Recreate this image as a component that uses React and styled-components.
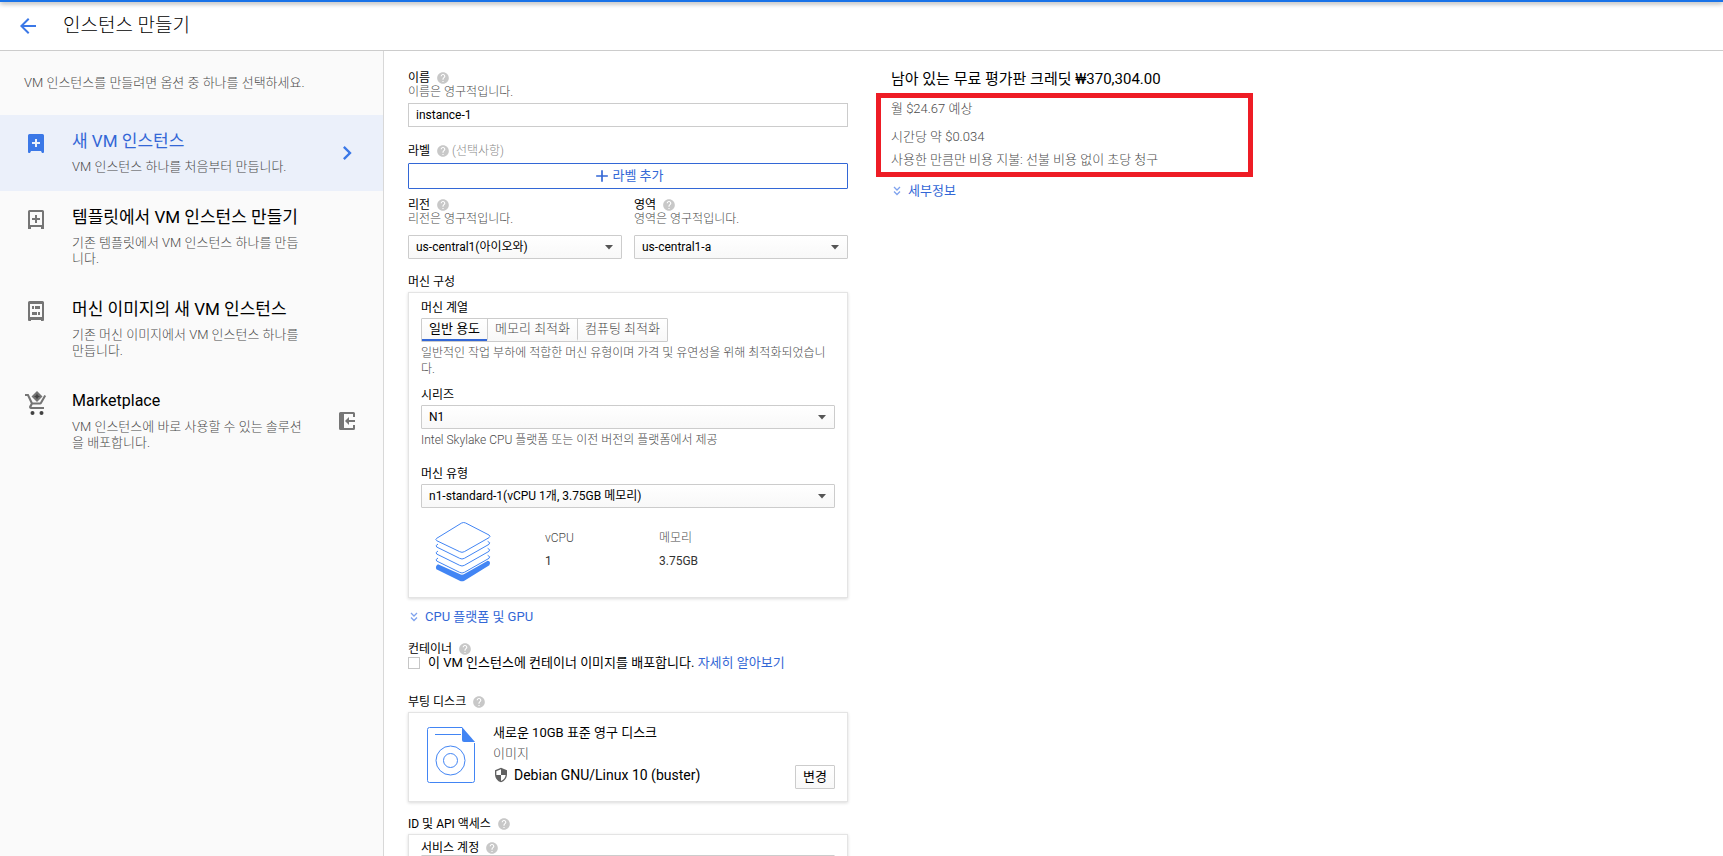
import React from "react";
import styled, { createGlobalStyle } from "styled-components";
import { MdAdd, MdArrowBack, MdChevronRight, MdHelp, MdSecurity } from "react-icons/md";

const BLUE = "#3367d6";
const ICON_BLUE = "#3b78e7";
const GREY = "#4a4a4a";

const Global = createGlobalStyle`
  * { box-sizing: border-box; }
  body {
    margin: 0;
    background: #fff;
    color: #000;
    font: 13px/16px Roboto, "Noto Sans CJK KR", sans-serif;
  }
  button, input, select { font: inherit; color: inherit; }
  h1, h2, p, dl, dd { margin: 0; font-weight: inherit; }
  a { color: ${BLUE}; text-decoration: none; }
  svg { display: block; flex: none; }
`;

const Page = styled.div`
  display: flex;
  flex-direction: column;
  height: 100vh;
  overflow: hidden;
`;
const TopBar = styled.div`
  flex: none;
  height: 2px;
  background: #1a73e8;
  box-shadow: 0 1px 5px rgba(0, 0, 0, 0.6);
`;
const Header = styled.header`
  flex: none;
  display: flex;
  align-items: center;
  gap: 23px;
  height: 49px;
  padding: 0 16px;
  border-bottom: 1px solid #ccc;
`;
const BackButton = styled.button`
  padding: 0;
  border: 0;
  background: none;
  color: ${ICON_BLUE};
  cursor: pointer;
`;
const Title = styled.h1`
  font-size: 19px;
  font-weight: 300;
  line-height: 24px;
`;
const Body = styled.div`
  flex: 1;
  display: flex;
  min-height: 0;
`;

const Sidebar = styled.nav`
  flex: none;
  width: 384px;
  background: #fafafa;
  border-right: 1px solid #d8d8d8;
`;
const Intro = styled.p`
  padding: 24px;
  color: ${GREY};
  font-weight: 300;
`;
const Option = styled.a`
  display: flex;
  gap: 24px;
  padding: 14px 24px 16px;
  background: ${(p) => (p.$active ? "#ebf0fa" : "none")};
  color: ${(p) => (p.$active ? BLUE : "#000")};
`;
const OptionIcon = styled.span`
  flex: none;
  width: 24px;
  padding-top: 3px;
  color: ${(p) => (p.$active ? ICON_BLUE : "#757575")};
`;
const OptionText = styled.span`
  display: flex;
  flex-direction: column;
  gap: 6px;
  width: 232px;
`;
const OptionTitle = styled.span`
  font-size: ${(p) => (p.$latin ? 16 : 17)}px;
  line-height: 24px;
  white-space: nowrap;
`;
const OptionNote = styled.span`
  color: ${GREY};
  font-weight: 300;
`;
const OptionEnd = styled.span`
  flex: 1;
  display: flex;
  align-items: center;
  justify-content: center;
  margin: -14px -6px -16px 0;
  color: ${(p) => (p.$active ? ICON_BLUE : "#757575")};
`;

const Main = styled.main`
  flex: 1;
  display: flex;
  align-items: flex-start;
  gap: 43px;
  padding: 18px 24px;
  overflow-y: auto;
  scrollbar-width: none;
`;
const Form = styled.form`
  flex: 0 1 440px;
`;
const Section = styled.section`
  padding-bottom: ${(p) => p.$gap || 0}px;
`;
const LabelRow = styled.div`
  display: flex;
  align-items: center;
  gap: 6px;
  height: 16px;
  padding-top: 2px;
  font-size: 12px;
`;
const HelpButton = styled.button`
  padding: 0;
  border: 0;
  background: none;
  color: #c8c8c8;
  cursor: pointer;
`;
const Optional = styled.span`
  margin-left: -4px;
  color: #8a8a8a;
  font-weight: 300;
`;
const Hint = styled.p`
  font-size: 12px;
  color: ${GREY};
  font-weight: 300;
`;
const FieldHint = styled(Hint)`
  margin-top: -1px;
  padding-bottom: ${(p) => p.$gap}px;
`;
const TextInput = styled.input`
  display: block;
  width: 100%;
  height: 24px;
  padding: 0 7px;
  border: 1px solid #ccc;
  background: #fff;
  font-size: 12px;
  outline: 0;
`;
const AddButton = styled.button`
  display: flex;
  align-items: center;
  justify-content: center;
  width: 100%;
  height: 26px;
  margin-top: 5px;
  border: 1px solid ${BLUE};
  border-radius: 1px;
  background: #fff;
  color: ${BLUE};
  cursor: pointer;
`;
const Columns = styled.div`
  display: grid;
  grid-template-columns: 1fr 1fr;
  gap: 12px;
`;
const SelectBox = styled.div`
  position: relative;
  margin: ${(p) => p.$space || 0}px 0;
`;
const Select = styled.select`
  display: block;
  appearance: none;
  width: 100%;
  height: 24px;
  padding: 0 24px 0 7px;
  border: 1px solid #ccc;
  border-radius: 1px;
  background: linear-gradient(#fff, #f8f8f8);
  font-size: 12px;
  outline: 0;
`;
const Caret = styled.svg`
  position: absolute;
  right: 9px;
  top: 10px;
  pointer-events: none;
`;
const Card = styled.div`
  margin-top: 3px;
  padding: ${(p) => p.$pad};
  border: 1px solid #e4e4e4;
  box-shadow: 0 1px 3px rgba(0, 0, 0, 0.15);
`;
const Tabs = styled.div`
  display: flex;
  width: max-content;
  margin: 3px 0;
  border: 1px solid #ccc;
  border-radius: 1px;
  background: linear-gradient(#fff, #f8f8f8);
`;
const Tab = styled.button`
  height: 22px;
  padding: 0 7px;
  border: 0;
  border-bottom: 2px solid ${(p) => (p.$active ? BLUE : "transparent")};
  background: none;
  color: ${(p) => (p.$active ? "#000" : GREY)};
  font-weight: ${(p) => (p.$active ? 400 : 300)};
  line-height: 20px;
  cursor: pointer;
  & + & { border-left: 1px solid #ccc; }
`;
const Specs = styled.div`
  display: flex;
  padding: 11px 14px 0;
`;
const SpecList = styled.dl`
  display: grid;
  grid-template-columns: 114px 114px;
  margin-left: 54px;
  padding-top: 8px;
`;
const Spec = styled.div`
  display: flex;
  flex-direction: column;
  gap: 7px;
  font-size: 12px;
  color: #333;
`;
const SpecName = styled.dt`
  color: ${GREY};
  font-weight: 300;
`;
const Expand = styled.a`
  display: inline-flex;
  align-items: center;
  gap: 7px;
  padding-left: 2px;
`;
const CheckRow = styled.div`
  display: flex;
  align-items: center;
  gap: 8px;
  margin-top: -1px;
`;
const CheckBox = styled.input`
  appearance: none;
  flex: none;
  width: 12px;
  height: 12px;
  margin: 0;
  border: 1px solid #c6c6c6;
  background: #fff;
`;
const Disk = styled.div`
  display: flex;
  min-height: 62px;
`;
const DiskInfo = styled.div`
  flex: 1;
  display: flex;
  flex-direction: column;
  gap: 5px;
  margin: -2px 0 0 18px;
`;
const DiskImage = styled.div`
  display: flex;
  align-items: center;
  gap: 5px;
  font-size: 14px;
`;
const ChangeButton = styled.button`
  align-self: flex-end;
  width: 40px;
  height: 24px;
  padding: 0;
  border: 1px solid #ccc;
  border-radius: 1px;
  background: linear-gradient(#fff, #f8f8f8);
  cursor: pointer;
`;

const Cost = styled.aside`
  display: flex;
  flex-direction: column;
  align-items: flex-start;
`;
const Credit = styled.h2`
  padding-bottom: 12px;
  font-size: 15px;
  line-height: 20px;
`;
const Estimate = styled.div`
  position: relative;
  width: 362px;
  margin-bottom: 6px;
  padding-bottom: 9px;
  color: ${GREY};
  font-weight: 300;
  &::after {
    content: "";
    position: absolute;
    inset: -8px 0 0 -15px;
    border: 5px solid #ee1c25;
    pointer-events: none;
  }
`;
const EstimateLine = styled.p`
  padding-bottom: ${(p) => p.$gap || 0}px;
`;

const Help = ({ about }) => (
  <HelpButton type="button" aria-label={`${about} 도움말`}>
    <MdHelp size={14} />
  </HelpButton>
);

const Dropdown = ({ id, value, space }) => (
  <SelectBox $space={space}>
    <Select id={id} defaultValue={value}>
      <option>{value}</option>
    </Select>
    <Caret width="8" height="5" viewBox="0 0 8 5">
      <path d="M0 0h8L4 4.5z" fill="#555" />
    </Caret>
  </SelectBox>
);

const DoubleChevron = () => (
  <svg width="8" height="10" viewBox="0 0 8 10" fill="none" stroke="#7fa3ee" strokeWidth="1.3">
    <path d="M1 1l3 3 3-3M1 5.500l3 3 3-3" />
  </svg>
);

const InstanceIcon = ({ filled }) => (
  <svg width="24" height="24" viewBox="0 -2 24 24" fill="currentColor">
    {filled ? (
      <path
        fillRule="evenodd"
        d="M5.500 0h13A1.500 1.500 0 0 1 20 1.500V18a1 1 0 0 1-1 1h-1l-1-2H7l-1 2H5a1 1 0 0 1-1-1V1.500A1.500 1.500 0 0 1 5.500 0zM11 5v3H8v2h3v3h2v-3h3V8h-3V5z"
      />
    ) : (
      <path
        fillRule="evenodd"
        d="M5.500 0h13A1.500 1.500 0 0 1 20 1.500V19h-3v-2H7v2H4V1.500A1.500 1.500 0 0 1 5.500 0zM6 2v13h12V2zm5 3v3H8v2h3v3h2v-3h3V8h-3V5z"
      />
    )}
  </svg>
);

const MachineImageIcon = () => (
  <svg width="24" height="24" viewBox="0 -1 24 24" fill="currentColor">
    <path
      fillRule="evenodd"
      d="M5.500 0h13A1.500 1.500 0 0 1 20 1.500V19a1 1 0 0 1-1 1h-2v-1H7v1H5a1 1 0 0 1-1-1V1.500A1.500 1.500 0 0 1 5.500 0zM6 3v13h12V3zm2 2h2v3H8zm3 0h5v3h-5zm-3 6h5v3H8zm6 0h2v3h-2z"
    />
  </svg>
);

const CartIcon = () => (
  <svg width="24" height="24" viewBox="0 2 24 24" fill="currentColor" overflow="visible">
    <path d="M1 4h3.600l4.100 8.500h7.300l4.300-7.500 1.800 1-4.300 7.600a2 2 0 0 1-1.800 1H8.600L7.500 17H20v2H7a2 2 0 0 1-1.700-3l1.500-2.500L3.300 6H1z" />
    <path d="M13 1l5.500 5.500L13 12 7.500 6.500z" />
    <path d="M13 3.500l1 2 2 1-2 1-1 2-1-2-2-1 2-1z" fill="#424242" />
    <circle cx="8.500" cy="23" r="2" fill="#424242" />
    <circle cx="17.500" cy="23" r="2" fill="#424242" />
  </svg>
);

const OpenPanelIcon = () => (
  <svg width="16" height="18" viewBox="0 0 16 18" fill="currentColor">
    <path
      fillRule="evenodd"
      d="M1.500 0h13A1.500 1.500 0 0 1 16 1.500V5h-2V2H5v14h9v-3h2v3.500a1.500 1.500 0 0 1-1.500 1.500h-13A1.500 1.500 0 0 1 0 16.500v-15A1.500 1.500 0 0 1 1.500 0z"
    />
    <path d="M6 9l4-4v3h6v2h-6v3z" />
  </svg>
);

const StackIcon = () => (
  <svg width="56" height="60" viewBox="0 0 168 180" fill="none" stroke="#4285f4" strokeWidth="3" strokeLinejoin="round">
    <path d="M80 3q6-3 12 0l70 36q6 4 0 8L88 89q-7 4-14 0L5 56q-5-3 0-7z" />
    <path d="M9 66q-9 5-4 9l69 34q7 4 14 0l74-42q6-5-4-9" />
    <path d="M9 87q-9 5-4 9l69 34q7 4 14 0l74-42q6-5-4-9" />
    <path d="M9 108q-9 5-4 9l69 34q7 4 14 0l74-42q6-5-4-9" />
    <path
      d="M9 127q-9 6-5 15l70 34q7 4 14 0l75-46q5-6 0-12l-5-2-70 40q-7 4-14 0z"
      fill="#4285f4"
      stroke="none"
    />
  </svg>
);

const DiskIcon = () => (
  <svg width="48" height="56" viewBox="0 0 48 56" fill="none" stroke="#4285f4">
    <path d="M35 .5H2.500a2 2 0 0 0-2 2v51a2 2 0 0 0 2 2h43a2 2 0 0 0 2-2V16M8 7.500h26" />
    <path d="M35 0l13 15H37a2 2 0 0 1-2-2z" fill="#4285f4" stroke="none" />
    <circle cx="23.500" cy="33.500" r="14.500" />
    <circle cx="23.500" cy="33.500" r="7" />
  </svg>
);

const OPTIONS = [
  {
    title: "새 VM 인스턴스",
    note: "VM 인스턴스 하나를 처음부터 만듭니다.",
    icon: <InstanceIcon filled />,
    end: <MdChevronRight size={28} />,
    active: true,
  },
  {
    title: "템플릿에서 VM 인스턴스 만들기",
    note: "기존 템플릿에서 VM 인스턴스 하나를 만듭니다.",
    icon: <InstanceIcon />,
  },
  {
    title: "머신 이미지의 새 VM 인스턴스",
    note: "기존 머신 이미지에서 VM 인스턴스 하나를 만듭니다.",
    icon: <MachineImageIcon />,
  },
  {
    title: "Marketplace",
    note: "VM 인스턴스에 바로 사용할 수 있는 솔루션을 배포합니다.",
    icon: <CartIcon />,
    end: <OpenPanelIcon />,
    latin: true,
  },
];

export default function App() {
  return (
    <Page>
      <Global />
      <TopBar />
      <Header>
        <BackButton type="button" aria-label="뒤로">
          <MdArrowBack size={24} />
        </BackButton>
        <Title>인스턴스 만들기</Title>
      </Header>
      <Body>
        <Sidebar>
          <Intro>VM 인스턴스를 만들려면 옵션 중 하나를 선택하세요.</Intro>
          {OPTIONS.map((o) => (
            <Option key={o.title} href="#" $active={o.active}>
              <OptionIcon $active={o.active}>{o.icon}</OptionIcon>
              <OptionText>
                <OptionTitle $latin={o.latin}>{o.title}</OptionTitle>
                <OptionNote>{o.note}</OptionNote>
              </OptionText>
              <OptionEnd $active={o.active}>{o.end}</OptionEnd>
            </Option>
          ))}
        </Sidebar>
        <Main>
          <Form>
            <Section $gap={15}>
              <LabelRow>
                <label htmlFor="name">이름</label>
                <Help about="이름" />
              </LabelRow>
              <FieldHint $gap={3}>이름은 영구적입니다.</FieldHint>
              <TextInput id="name" defaultValue="instance-1" />
            </Section>
            <Section $gap={7}>
              <LabelRow>
                <span>라벨</span>
                <Help about="라벨" />
                <Optional>(선택사항)</Optional>
              </LabelRow>
              <AddButton type="button">
                <MdAdd size={20} />
                라벨 추가
              </AddButton>
            </Section>
            <Columns>
              <Section $gap={14}>
                <LabelRow>
                  <label htmlFor="region">리전</label>
                  <Help about="리전" />
                </LabelRow>
                <FieldHint $gap={8}>리전은 영구적입니다.</FieldHint>
                <Dropdown id="region" value="us-central1(아이오와)" />
              </Section>
              <Section $gap={14}>
                <LabelRow>
                  <label htmlFor="zone">영역</label>
                  <Help about="영역" />
                </LabelRow>
                <FieldHint $gap={8}>영역은 영구적입니다.</FieldHint>
                <Dropdown id="zone" value="us-central1-a" />
              </Section>
            </Columns>
            <Section $gap={11}>
              <LabelRow>머신 구성</LabelRow>
              <Card $pad="6px 12px 15px">
                <LabelRow>머신 계열</LabelRow>
                <Tabs>
                  <Tab type="button" $active>일반 용도</Tab>
                  <Tab type="button">메모리 최적화</Tab>
                  <Tab type="button">컴퓨팅 최적화</Tab>
                </Tabs>
                <Section $gap={9}>
                  <Hint>
                    일반적인 작업 부하에 적합한 머신 유형이며 가격 및 유연성을 위해 최적화되었습니다.
                  </Hint>
                </Section>
                <Section $gap={17}>
                  <LabelRow>
                    <label htmlFor="series">시리즈</label>
                  </LabelRow>
                  <Dropdown id="series" value="N1" space={3} />
                  <Hint>Intel Skylake CPU 플랫폼 또는 이전 버전의 플랫폼에서 제공</Hint>
                </Section>
                <LabelRow>
                  <label htmlFor="type">머신 유형</label>
                </LabelRow>
                <Dropdown id="type" value="n1-standard-1(vCPU 1개, 3.75GB 메모리)" space={3} />
                <Specs>
                  <StackIcon />
                  <SpecList>
                    <Spec>
                      <SpecName>vCPU</SpecName>
                      <dd>1</dd>
                    </Spec>
                    <Spec>
                      <SpecName>메모리</SpecName>
                      <dd>3.75GB</dd>
                    </Spec>
                  </SpecList>
                </Specs>
              </Card>
            </Section>
            <Section $gap={14}>
              <Expand href="#">
                <DoubleChevron />
                CPU 플랫폼 및 GPU
              </Expand>
            </Section>
            <Section $gap={22}>
              <LabelRow>
                <span>컨테이너</span>
                <Help about="컨테이너" />
              </LabelRow>
              <CheckRow>
                <CheckBox type="checkbox" id="container" />
                <span>
                  <label htmlFor="container">이 VM 인스턴스에 컨테이너 이미지를 배포합니다.</label>{" "}
                  <a href="#">자세히 알아보기</a>
                </span>
              </CheckRow>
            </Section>
            <Section $gap={13}>
              <LabelRow>
                <span>부팅 디스크</span>
                <Help about="부팅 디스크" />
              </LabelRow>
              <Card $pad="14px 12px 12px 18px">
                <Disk>
                  <DiskIcon />
                  <DiskInfo>
                    <p>새로운 10GB 표준 영구 디스크</p>
                    <SpecName as="p">이미지</SpecName>
                    <DiskImage>
                      <MdSecurity size={16} color="#616161" />
                      Debian GNU/Linux 10 (buster)
                    </DiskImage>
                  </DiskInfo>
                  <ChangeButton type="button">변경</ChangeButton>
                </Disk>
              </Card>
            </Section>
            <Section>
              <LabelRow>
                <span>ID 및 API 액세스</span>
                <Help about="ID 및 API 액세스" />
              </LabelRow>
              <Card $pad="4px 12px">
                <LabelRow>
                  <label htmlFor="account">서비스 계정</label>
                  <Help about="서비스 계정" />
                </LabelRow>
                <Dropdown id="account" value="" />
              </Card>
            </Section>
          </Form>
          <Cost>
            <Credit>남아 있는 무료 평가판 크레딧 ₩370,304.00</Credit>
            <Estimate>
              <EstimateLine $gap={12}>월 $24.67 예상</EstimateLine>
              <EstimateLine $gap={7}>시간당 약 $0.034</EstimateLine>
              <EstimateLine>사용한 만큼만 비용 지불: 선불 비용 없이 초당 청구</EstimateLine>
            </Estimate>
            <Expand href="#">
              <DoubleChevron />
              세부정보
            </Expand>
          </Cost>
        </Main>
      </Body>
    </Page>
  );
}
